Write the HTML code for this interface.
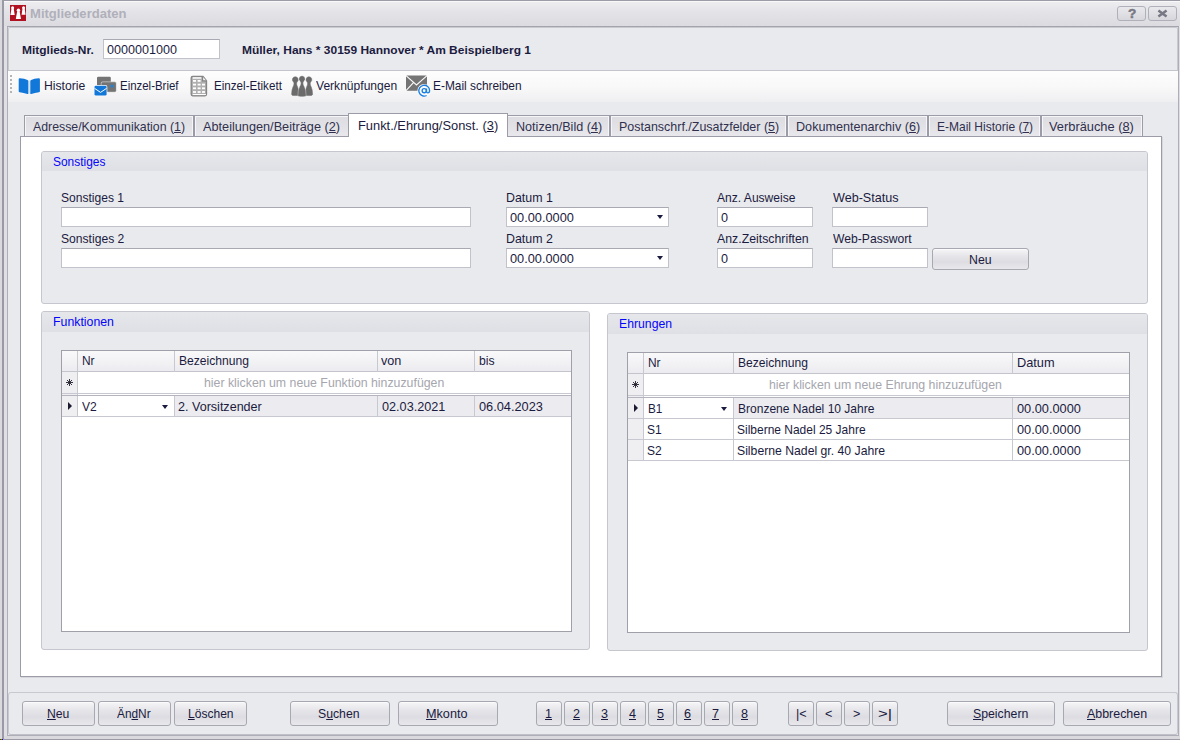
<!DOCTYPE html>
<html lang="de"><head><meta charset="utf-8"><title>Mitgliederdaten</title>
<style>
*{box-sizing:border-box;margin:0;padding:0}
html,body{width:1180px;height:740px;overflow:hidden}
body{position:relative;background:#e9eaee;font-family:"Liberation Sans",sans-serif;font-size:13px;color:#1b1b40}
div,span,svg{position:absolute}
.t{white-space:nowrap;line-height:13px;font-size:13px;transform-origin:0 0;color:#1b1b40}
.t u{text-decoration:underline;text-underline-offset:1px}
/* frame */
.fl0{left:0;top:0;width:2px;height:740px;background:#dadade}
.fl1{left:2px;top:0;width:2px;height:740px;background:#9a9aa6}
.fl2{left:4px;top:26px;width:3px;height:710px;background:#dfdfe4}
.ftop{left:2px;top:0;width:1178px;height:1px;background:#9c9ca6}
.title{left:4px;top:1px;width:1176px;height:25px;background:linear-gradient(#ededf0,#e3e3e7 45%,#dbdbe0);border-top:1px solid #f8f8fa}
.tline{left:7px;top:26px;width:1172px;height:1px;background:#a4a4ae}
.client{left:7px;top:27px;width:1172px;height:709px;border:1px solid #aeaeb8;border-top:0;background:#e9eaee}
.fb0{left:4px;top:736px;width:1176px;height:3px;background:#d9d9de}
.fb1{left:2px;top:739px;width:1178px;height:1px;background:#9c9ca6}
.fr{left:1179px;top:27px;width:1px;height:709px;background:#dedee3}
/* title buttons */
.tb{top:6px;width:29px;height:15px;border:1px solid #b0b0ba;border-radius:3px;background:linear-gradient(#e9e9ed,#d6d6dc)}
/* header */
.hdr{left:8px;top:27px;width:1170px;height:44px;border-bottom:1px solid #c4c4cc;border-top:1px solid #c9c9d0;border-left:1px solid #c9c9d0;border-right:1px solid #c9c9d0;border-radius:2px 2px 0 0}
.inp{background:#fff;border:1px solid #c2c2ca;border-top-color:#a9a9b3}
/* toolbar */
.tool{left:8px;top:71px;width:1170px;height:31px;background:linear-gradient(#fdfdfd,#f8f8f9 55%,#efeff1)}
.grip{left:10px;width:2px;height:2px;background:#b4b4b8}
/* tabs */
.tabs{left:24px;top:115px;width:1119px;height:22px;border:1px solid #9c9ca8;border-bottom:0;background:linear-gradient(#dcdce1,#e2e2e6 50%,#e9e9ed);box-shadow:inset 1px 1px 0 #f6f6f8,inset -1px 0 0 #f6f6f8}
.tsep{top:116px;width:2px;height:20px;background:#9c9ca8;box-shadow:-1px 0 0 #f6f6f8,1px 0 0 #f6f6f8}
.tab.act{left:348px;top:113px;width:160px;height:24px;border:1px solid #9c9ca8;border-bottom:0;background:#fff;z-index:3}
.page{left:20px;top:136px;width:1142px;height:541px;background:#fff;border:1px solid #9c9ca8;z-index:2;box-shadow:1px 1px 0 #d6d6dc}
/* groups */
.grp{border:1px solid #c6c6ce;border-radius:3px;background:#e9eaee;z-index:4;overflow:hidden}
.grp .gh{left:0;top:0;right:0;height:19px;background:linear-gradient(#e6e7eb,#dfe0e5)}
.z{z-index:5}
.btn{border:1px solid #a8a8b2;border-radius:3px;background:linear-gradient(#f6f6f8,#e6e6ea 35%,#dcdce2 65%,#e8e8ec);box-shadow:inset 0 1px 0 #fbfbfc}
.arr{width:0;height:0;border-left:3.5px solid transparent;border-right:3.5px solid transparent;border-top:4px solid #1b1b40}
.rarr{width:0;height:0;border-top:4px solid transparent;border-bottom:4px solid transparent;border-left:4px solid #1a1a30}
/* grid */
.grid{background:#fff;border:1px solid #a0a0aa;z-index:5;overflow:hidden}
.gh2{left:0;top:0;right:0;height:21px;background:linear-gradient(#f9f9fa,#ececf0);border-bottom:1px solid #c4c4cc}
.vl{width:1px;background:#c8c8d0}
.hl{height:1px;left:0;right:0;background:#c8c8d0}
.ind{left:0;width:15px;background:#efeff2}
.sel{background:#ececf0}
.t{z-index:10}

</style></head>
<body>
<div class="fl0"></div><div class="fl1"></div><div class="ftop"></div>
<div class="title"></div><div class="tline"></div>
<div class="fl2"></div>
<div class="client"></div>
<div class="fr"></div><div class="fb0"></div><div class="fb1"></div>
<div style="left:0;top:739px;width:1px;height:1px;background:#e00000"></div><div style="left:1px;top:739px;width:1px;height:1px;background:#00c000"></div><div style="left:2px;top:739px;width:1px;height:1px;background:#0000e0"></div>
<!-- app icon -->
<svg style="left:10px;top:5px" width="16" height="16" viewBox="0 0 16 16"><rect width="16" height="16" fill="#b01222"/><g fill="#fff"><circle cx="2.6" cy="2.8" r="1.5"/><path d="M1.5 3.6h2.2l1 6.4H.4z"/><circle cx="13.6" cy="2.8" r="1.5"/><path d="M12.5 3.6h2.2l.9 6.2h-4z"/><circle cx="8.4" cy="5.2" r="1.7"/><path d="M7.2 6.2h2.4l1.4 7.8H5.8z"/></g></svg>
<!-- title buttons -->
<div class="tb" style="left:1117px"></div><div class="tb" style="left:1148px"></div>
<span class="t" style="left:1127.500px;top:7px;font-weight:bold;font-size:13px;color:#787884;-webkit-text-stroke:.45px #787884;transform:scaleX(1.05)">?</span>
<svg style="left:1157px;top:9px" width="11" height="9" viewBox="0 0 11 9"><path d="M1.400 1.500l8.200 6M9.600 1.500L1.400 7.500" stroke="#787884" stroke-width="2.500" fill="none"/></svg>
<!-- header -->
<div class="hdr"></div>
<div class="inp" style="left:103px;top:39px;width:117px;height:20px"></div>
<!-- toolbar -->
<div class="tool"></div>
<div class="grip" style="top:75px"></div><div class="grip" style="top:79px"></div><div class="grip" style="top:83px"></div><div class="grip" style="top:87px"></div><div class="grip" style="top:91px"></div>
<!-- ICONS -->
<svg style="left:0;top:70px;z-index:6" width="440" height="32" viewBox="0 70 440 32">
<!-- book -->
<rect x="28.400" y="80.500" width="1.500" height="13" fill="#cfe2f6"/>
<g fill="#1177d8">
<path d="M18.7 79.2q0-1.1 1.1-1 4.6.4 7.7 1.7.8.3.8 1.1v12.4q0 .9-.9.6-3.600-1.300-7.700-1.800-1-.1-1-1z"/>
<path d="M39.900 79.200q0-1.100-1.100-1-4.600.4-7.700 1.700-.8.3-.8 1.100v12.400q0 .9.900.6 3.600-1.300 7.700-1.800 1-.1 1-1z"/>
</g>
<!-- einzel-brief -->
<rect x="97" y="76.700" width="13.800" height="9" rx="1.200" fill="#747474"/>
<rect x="100.800" y="81.500" width="15.600" height="10.700" rx="1.600" fill="#c9c9c9"/>
<rect x="101.500" y="82.200" width="14.400" height="9.500" rx="1.200" fill="#747474"/>
<rect x="110.700" y="84.800" width="2.600" height="2.600" rx=".5" fill="#1f83e0"/>
<rect x="93.800" y="85.100" width="13.500" height="11.200" rx="1.800" fill="#fbfbfb"/>
<rect x="94.500" y="85.800" width="12.100" height="9.800" rx="1.300" fill="#1177d8"/>
<path d="M94.500 88.300l6.050 4.100 6.050-4.100" stroke="#fff" stroke-width="1" fill="none"/>
<!-- einzel-etikett -->
<path d="M192.700 76.500h10.300l3.500 4.200v13.600q0 1.500-1.500 1.500h-12.300q-1.500 0-1.500-1.500v-16.300q0-1.500 1.500-1.500z" fill="#b0b0b0" stroke="#858585" stroke-width="1.300"/>
<path d="M202.600 76.600v4.300h3.900" fill="#f4f4f4" stroke="#828282" stroke-width="1.100"/>
<g fill="#fff">
<rect x="192.700" y="77.200" width="8.600" height="1.500"/>
<rect x="192.700" y="94" width="13.200" height="1"/>
<rect x="193" y="80" width="3" height="1.800"/><rect x="197.600" y="80" width="3" height="1.800"/>
<rect x="193" y="83.700" width="3" height="1.800"/><rect x="197.600" y="83.700" width="3" height="1.800"/><rect x="202" y="83.700" width="3" height="1.800"/>
<rect x="193" y="87.400" width="3" height="1.800"/><rect x="197.600" y="87.400" width="3" height="1.800"/><rect x="202" y="87.400" width="3" height="1.800"/>
<rect x="193" y="91.100" width="3" height="1.800"/><rect x="197.600" y="91.100" width="3" height="1.800"/><rect x="202" y="91.100" width="3" height="1.800"/>
</g>
<!-- verknuepfungen -->
<g fill="#6b6b6b" stroke="#6b6b6b" stroke-width=".5" stroke-linejoin="round">
<path d="M295.300 76.700a2.950 2.950 0 0 1 2 5.100q-.9.900-.7 2.200.2 1.300 1 2.900 1.400 2.900 1.400 7.500 0 1.200-3.700 1.200t-3.700-1.200q0-4.600 1.400-7.500.8-1.600 1-2.900.2-1.300-.7-2.200a2.950 2.950 0 0 1 2-5.100z"/>
<path d="M308.900 76.700a2.950 2.950 0 0 1 2 5.100q-.9.900-.7 2.200.2 1.300 1 2.900 1.400 2.900 1.400 7.500 0 1.200-3.700 1.200t-3.700-1.200q0-4.600 1.400-7.500.8-1.600 1-2.900.2-1.300-.7-2.200a2.950 2.950 0 0 1 2-5.100z"/>
<path d="M302 75.800a3.100 3.100 0 0 1 2.100 5.400q-.9.900-.8 2.200.2 1.600 1.200 3.300 1.600 3 1.600 8.600 0 1.500-4.100 1.500t-4.100-1.500q0-5.600 1.600-8.600 1-1.700 1.200-3.300.1-1.300-.8-2.200a3.100 3.100 0 0 1 2.100-5.400z" stroke="#fdfdfd" stroke-opacity=".55" stroke-width=".6"/>
</g>
<!-- email -->
<rect x="406" y="75.600" width="21" height="15.100" rx="1" fill="#747474"/>
<path d="M406 75.600l10.500 9.300 10.500-9.300M406 90.700l7.700-8.300" stroke="#fcfcfc" stroke-width="1.100" fill="none"/>
<circle cx="424.200" cy="90.600" r="6.700" fill="#fbfbfb"/>
<g fill="none" stroke="#1a7fe0" stroke-width="1.350">
<path d="M426.600 95.500a5.400 5.400 0 1 1 3-4.900q0 2.300-1.700 2.300-1.400 0-1.400-1.700v-2.600"/>
<circle cx="424.200" cy="90.700" r="2.050"/>
</g>
</svg>
<!-- /ICONS -->
<!-- tabs -->
<div class="tabs"></div>
<div class="tsep" style="left:193px"></div><div class="tsep" style="left:609px"></div><div class="tsep" style="left:786px"></div><div class="tsep" style="left:927px"></div><div class="tsep" style="left:1040px"></div>
<div class="page"></div>
<div class="tab act"></div>
<!-- group Sonstiges -->
<div class="grp" style="left:41px;top:151px;width:1107px;height:153px"><div class="gh"></div></div>
<div class="inp z" style="left:61px;top:207px;width:410px;height:20px"></div>
<div class="inp z" style="left:61px;top:248px;width:410px;height:20px"></div>
<div class="inp z" style="left:506px;top:207px;width:163px;height:20px"></div>
<div class="inp z" style="left:506px;top:248px;width:163px;height:20px"></div>
<div class="arr z" style="left:657px;top:215px"></div><div class="arr z" style="left:657px;top:256px"></div>
<div class="inp z" style="left:717px;top:207px;width:96px;height:20px"></div>
<div class="inp z" style="left:717px;top:248px;width:96px;height:20px"></div>
<div class="inp z" style="left:832px;top:207px;width:96px;height:20px"></div>
<div class="inp z" style="left:832px;top:248px;width:96px;height:20px"></div>
<div class="btn z" style="left:932px;top:248px;width:97px;height:22px"></div>
<!-- group Funktionen -->
<div class="grp" style="left:41px;top:311px;width:549px;height:339px"><div class="gh" style="height:20px"></div></div>
<div class="grid" style="left:61px;top:350px;width:511px;height:282px">
  <div class="gh2"></div>
  <div class="ind" style="top:21px;height:45px"></div>
  <div class="sel" style="left:16px;top:45px;right:0;height:20px"></div>
  <div style="left:16px;top:45px;width:97px;height:20px;background:#fff"></div>
  <div class="vl" style="left:15px;top:0;height:66px"></div>
  <div class="vl" style="left:112px;top:0;height:21px"></div><div class="vl" style="left:112px;top:45px;height:21px"></div>
  <div class="vl" style="left:315px;top:0;height:21px"></div><div class="vl" style="left:315px;top:45px;height:21px"></div>
  <div class="vl" style="left:412px;top:0;height:21px"></div><div class="vl" style="left:412px;top:45px;height:21px"></div>
  <div class="hl" style="top:42px"></div><div class="hl" style="top:44px;background:#b4b4be"></div>
  <div class="hl" style="top:65px"></div>
  <div class="rarr" style="left:6px;top:51px"></div>
  <div class="arr" style="left:100px;top:54px"></div>
  <svg style="left:4px;top:28px" width="7" height="7" viewBox="0 0 7 7"><path d="M3.500 0v7M0 3.500h7M1 1l5 5M6 1l-5 5" stroke="#20202c" stroke-width=".9" fill="none"/></svg>
</div>
<!-- group Ehrungen -->
<div class="grp" style="left:607px;top:313px;width:541px;height:338px"><div class="gh" style="height:20px"></div></div>
<div class="grid" style="left:627px;top:352px;width:503px;height:281px">
  <div class="gh2"></div>
  <div class="ind" style="top:21px;height:87px"></div>
  <div class="sel" style="left:16px;top:45px;right:0;height:20px"></div>
  <div style="left:16px;top:45px;width:90px;height:20px;background:#fff"></div>
  <div class="vl" style="left:15px;top:0;height:108px"></div>
  <div class="vl" style="left:105px;top:0;height:21px"></div><div class="vl" style="left:105px;top:45px;height:63px"></div>
  <div class="vl" style="left:384px;top:0;height:21px"></div><div class="vl" style="left:384px;top:45px;height:63px"></div>
  <div class="hl" style="top:42px"></div><div class="hl" style="top:44px;background:#b4b4be"></div>
  <div class="hl" style="top:65px"></div><div class="hl" style="top:86px"></div><div class="hl" style="top:107px"></div>
  <div class="rarr" style="left:6px;top:51px"></div>
  <div class="arr" style="left:93px;top:54px"></div>
  <svg style="left:4px;top:28px" width="7" height="7" viewBox="0 0 7 7"><path d="M3.500 0v7M0 3.500h7M1 1l5 5M6 1l-5 5" stroke="#20202c" stroke-width=".9" fill="none"/></svg>
</div>
<!-- bottom bar -->
<div style="left:8px;top:692px;width:1170px;height:43px;border:1px solid #c8c8d0;border-bottom-color:#c0c0c8;border-radius:3px"></div>
<div class="btn" style="left:22px;top:701px;width:73px;height:25px"></div><div class="btn" style="left:98px;top:701px;width:73px;height:25px"></div><div class="btn" style="left:174px;top:701px;width:73px;height:25px"></div><div class="btn" style="left:290px;top:701px;width:100px;height:25px"></div><div class="btn" style="left:398px;top:701px;width:100px;height:25px"></div><div class="btn" style="left:536px;top:701px;width:26px;height:25px"></div><div class="btn" style="left:564px;top:701px;width:26px;height:25px"></div><div class="btn" style="left:592px;top:701px;width:26px;height:25px"></div><div class="btn" style="left:620px;top:701px;width:26px;height:25px"></div><div class="btn" style="left:648px;top:701px;width:26px;height:25px"></div><div class="btn" style="left:676px;top:701px;width:26px;height:25px"></div><div class="btn" style="left:704px;top:701px;width:26px;height:25px"></div><div class="btn" style="left:732px;top:701px;width:26px;height:25px"></div><div class="btn" style="left:788px;top:701px;width:26px;height:25px"></div><div class="btn" style="left:816px;top:701px;width:26px;height:25px"></div><div class="btn" style="left:844px;top:701px;width:26px;height:25px"></div><div class="btn" style="left:872px;top:701px;width:26px;height:25px"></div><div class="btn" style="left:947px;top:701px;width:108px;height:25px"></div><div class="btn" style="left:1063px;top:701px;width:108px;height:25px"></div>

<!-- text -->
<span class="t" style="left:30.32px;top:7px;transform:scaleX(1.0053);font-weight:bold;color:#b0b0ba">Mitgliederdaten</span>
<span class="t" style="left:21.82px;top:44px;transform:scaleX(1.0866);font-weight:bold;font-size:11px;">Mitglieds-Nr.</span>
<span class="t" style="left:106.60px;top:43px;transform:scaleX(0.9665);">0000001000</span>
<span class="t" style="left:241.83px;top:44px;transform:scaleX(1.0882);font-weight:bold;font-size:11px;">Müller, Hans * 30159 Hannover * Am Beispielberg 1</span>
<span class="t" style="left:43.60px;top:79px;transform:scaleX(0.9383);">Historie</span>
<span class="t" style="left:119.60px;top:79px;transform:scaleX(0.8802);">Einzel-Brief</span>
<span class="t" style="left:213.60px;top:79px;transform:scaleX(0.8945);">Einzel-Etikett</span>
<span class="t" style="left:316.32px;top:79px;transform:scaleX(0.9283);">Verknüpfungen</span>
<span class="t" style="left:432.55px;top:79px;transform:scaleX(0.9152);">E-Mail schreiben</span>
<span class="t" style="left:33.05px;top:120px;transform:scaleX(0.9478);color:#30304e">Adresse/Kommunikation (<u>1</u>)</span>
<span class="t" style="left:203.05px;top:120px;transform:scaleX(0.9773);color:#30304e">Abteilungen/Beiträge (<u>2</u>)</span>
<span class="t" style="left:357.60px;top:119px;transform:scaleX(0.9897);">Funkt./Ehrung/Sonst. (<u>3</u>)</span>
<span class="t" style="left:515.55px;top:120px;transform:scaleX(0.9685);color:#30304e">Notizen/Bild (<u>4</u>)</span>
<span class="t" style="left:618.55px;top:120px;transform:scaleX(0.9594);color:#30304e">Postanschrf./Zusatzfelder (<u>5</u>)</span>
<span class="t" style="left:795.55px;top:120px;transform:scaleX(0.9705);color:#30304e">Dokumentenarchiv (<u>6</u>)</span>
<span class="t" style="left:936.55px;top:120px;transform:scaleX(0.9236);color:#30304e">E-Mail Historie (<u>7</u>)</span>
<span class="t" style="left:1049.33px;top:120px;transform:scaleX(0.9871);color:#30304e">Verbräuche (<u>8</u>)</span>
<span class="t" style="left:52.82px;top:155px;transform:scaleX(0.9184);color:#0505fa">Sonstiges</span>
<span class="t" style="left:52.60px;top:315px;transform:scaleX(0.9477);color:#0505fa">Funktionen</span>
<span class="t" style="left:618.60px;top:317px;transform:scaleX(0.9411);color:#0505fa">Ehrungen</span>
<span class="t" style="left:60.82px;top:191px;transform:scaleX(0.9278);">Sonstiges 1</span>
<span class="t" style="left:60.82px;top:232px;transform:scaleX(0.9315);">Sonstiges 2</span>
<span class="t" style="left:505.60px;top:191px;transform:scaleX(0.9533);">Datum 1</span>
<span class="t" style="left:505.60px;top:232px;transform:scaleX(0.9533);">Datum 2</span>
<span class="t" style="left:509.60px;top:211px;transform:scaleX(0.9824);">00.00.0000</span>
<span class="t" style="left:509.60px;top:252px;transform:scaleX(0.9824);">00.00.0000</span>
<span class="t" style="left:717.05px;top:191px;transform:scaleX(0.9282);">Anz. Ausweise</span>
<span class="t" style="left:717.05px;top:232px;transform:scaleX(0.9467);">Anz.Zeitschriften</span>
<span class="t" style="left:720.75px;top:211px;transform:scaleX(0.9700);">0</span>
<span class="t" style="left:720.75px;top:252px;transform:scaleX(0.9700);">0</span>
<span class="t" style="left:832.68px;top:191px;transform:scaleX(0.9688);">Web-Status</span>
<span class="t" style="left:832.68px;top:232px;transform:scaleX(0.9342);">Web-Passwort</span>
<span class="t" style="left:968.55px;top:253px;transform:scaleX(0.9462);">Neu</span>
<span class="t" style="left:81.55px;top:354px;transform:scaleX(0.9177);">Nr</span>
<span class="t" style="left:178.55px;top:354px;transform:scaleX(0.9314);">Bezeichnung</span>
<span class="t" style="left:381.32px;top:354px;transform:scaleX(0.9728);">von</span>
<span class="t" style="left:478.82px;top:354px;transform:scaleX(0.9367);">bis</span>
<span class="t" style="left:203.83px;top:376px;transform:scaleX(0.9473);color:#a6a6ae">hier klicken um neue Funktion hinzuzufügen</span>
<span class="t" style="left:82.27px;top:400px;transform:scaleX(0.9267);">V2</span>
<span class="t" style="left:178.10px;top:400px;transform:scaleX(0.9661);">2. Vorsitzender</span>
<span class="t" style="left:381.60px;top:400px;transform:scaleX(0.9746);">02.03.2021</span>
<span class="t" style="left:478.60px;top:400px;transform:scaleX(0.9824);">06.04.2023</span>
<span class="t" style="left:647.55px;top:356px;transform:scaleX(0.9177);">Nr</span>
<span class="t" style="left:737.55px;top:356px;transform:scaleX(0.9314);">Bezeichnung</span>
<span class="t" style="left:1016.55px;top:356px;transform:scaleX(0.9810);">Datum</span>
<span class="t" style="left:768.88px;top:378px;transform:scaleX(0.9478);color:#a6a6ae">hier klicken um neue Ehrung hinzuzufügen</span>
<span class="t" style="left:647.55px;top:402px;transform:scaleX(0.9067);">B1</span>
<span class="t" style="left:737.55px;top:402px;transform:scaleX(0.9255);">Bronzene Nadel 10 Jahre</span>
<span class="t" style="left:1016.60px;top:402px;transform:scaleX(0.9824);">00.00.0000</span>
<span class="t" style="left:646.88px;top:423px;transform:scaleX(0.9251);">S1</span>
<span class="t" style="left:736.88px;top:423px;transform:scaleX(0.9217);">Silberne Nadel 25 Jahre</span>
<span class="t" style="left:1016.60px;top:423px;transform:scaleX(0.9824);">00.00.0000</span>
<span class="t" style="left:646.88px;top:444px;transform:scaleX(0.9251);">S2</span>
<span class="t" style="left:736.88px;top:444px;transform:scaleX(0.9402);">Silberne Nadel gr. 40 Jahre</span>
<span class="t" style="left:1016.60px;top:444px;transform:scaleX(0.9824);">00.00.0000</span>
<span class="t" style="left:46.55px;top:707px;transform:scaleX(0.9393);"><u>N</u>eu</span>
<span class="t" style="left:117.05px;top:707px;transform:scaleX(0.9122);">Än<u>d</u>Nr</span>
<span class="t" style="left:187.55px;top:707px;transform:scaleX(0.9268);"><u>L</u>öschen</span>
<span class="t" style="left:318.27px;top:707px;transform:scaleX(0.9418);">S<u>u</u>chen</span>
<span class="t" style="left:426.49px;top:707px;transform:scaleX(0.9725);"><u>M</u>konto</span>
<span class="t" style="left:544.70px;top:707px;transform:scaleX(0.9700);"><u>1</u></span>
<span class="t" style="left:573.02px;top:707px;transform:scaleX(0.9700);"><u>2</u></span>
<span class="t" style="left:600.55px;top:707px;transform:scaleX(0.9700);"><u>3</u></span>
<span class="t" style="left:629.05px;top:707px;transform:scaleX(0.9700);"><u>4</u></span>
<span class="t" style="left:656.55px;top:707px;transform:scaleX(0.9700);"><u>5</u></span>
<span class="t" style="left:684.42px;top:707px;transform:scaleX(0.9700);"><u>6</u></span>
<span class="t" style="left:712.42px;top:707px;transform:scaleX(0.9700);"><u>7</u></span>
<span class="t" style="left:741.30px;top:707px;transform:scaleX(0.9700);"><u>8</u></span>
<span class="t" style="left:795.92px;top:707px;transform:scaleX(0.9700);">|&lt;</span>
<span class="t" style="left:824.92px;top:707px;transform:scaleX(0.9700);">&lt;</span>
<span class="t" style="left:852.92px;top:707px;transform:scaleX(0.9700);">&gt;</span>
<span class="t" style="left:878.05px;top:707px;transform:scaleX(1.2774);">&gt;|</span>
<span class="t" style="left:972.88px;top:707px;transform:scaleX(0.9450);"><u>S</u>peichern</span>
<span class="t" style="left:1087.00px;top:707px;transform:scaleX(0.9558);"><u>A</u>bbrechen</span>
</body></html>
